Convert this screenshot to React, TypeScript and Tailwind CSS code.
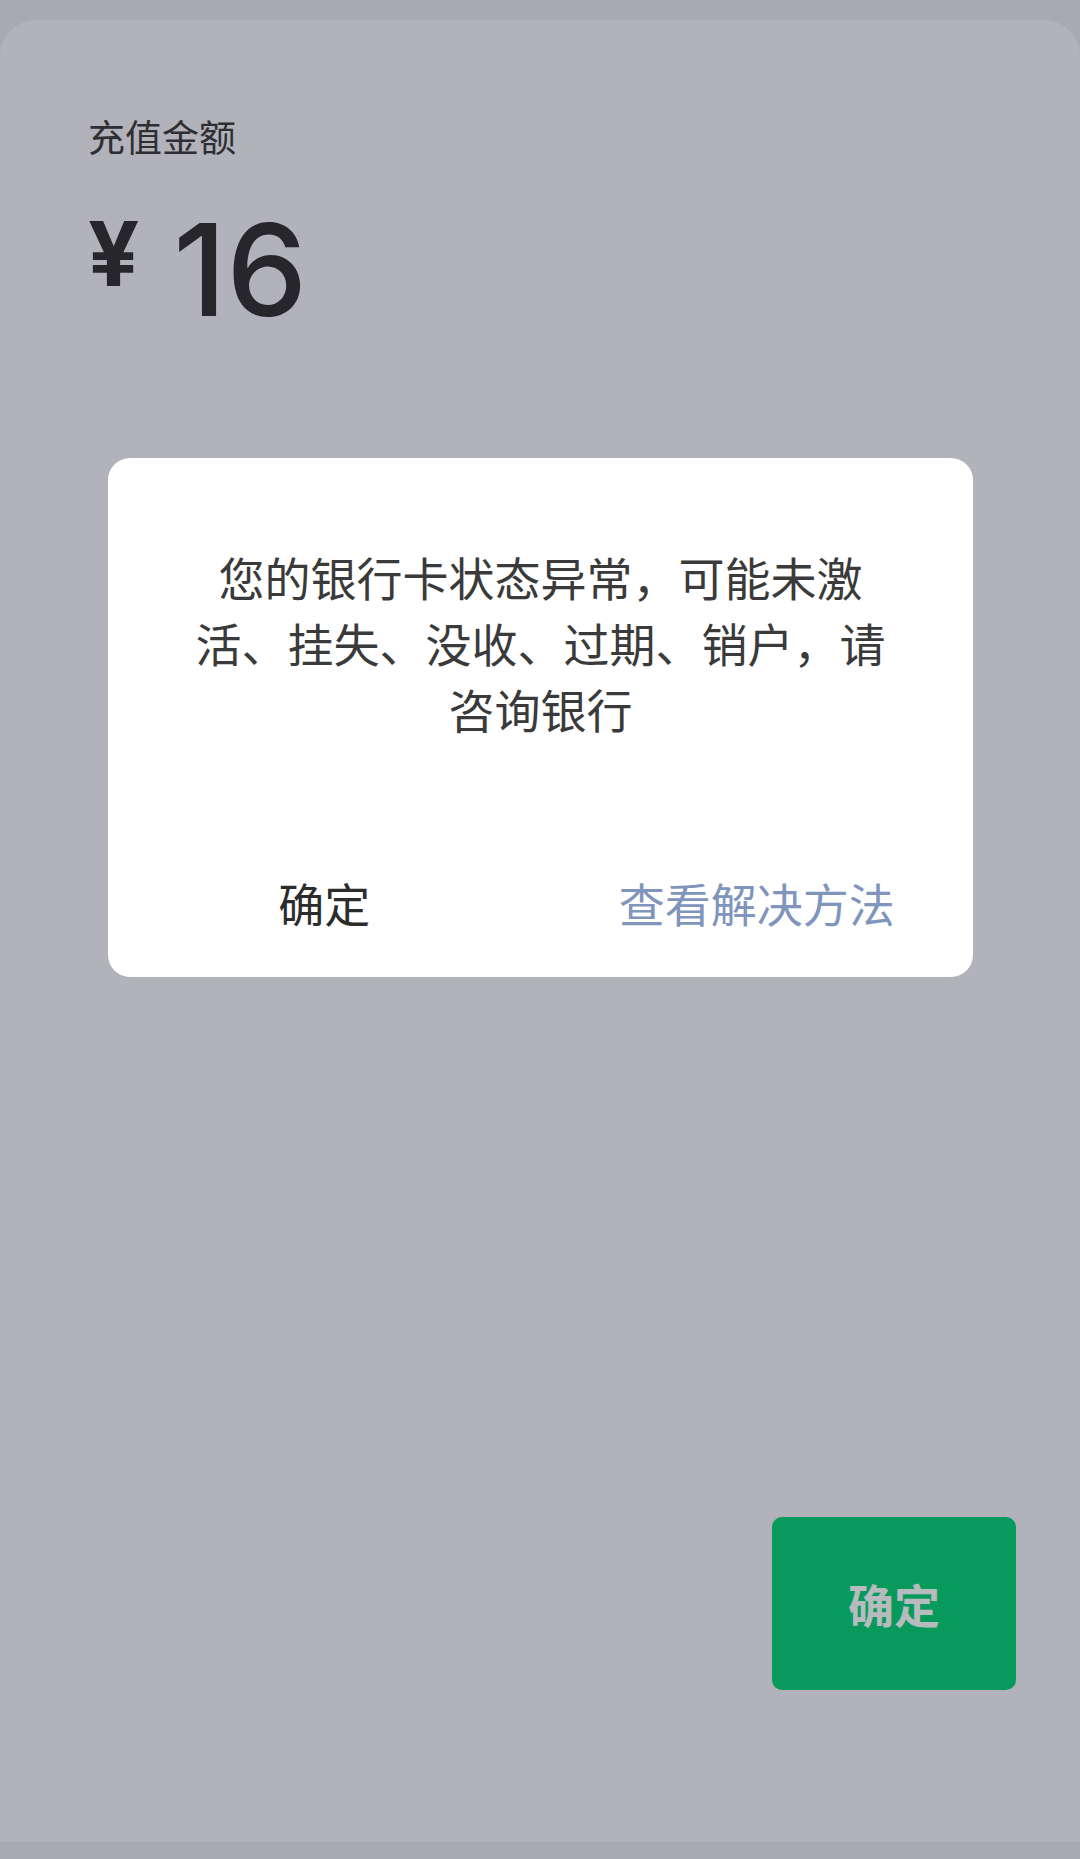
import React from 'react';

const cjk = { fontFamily: '"Noto Sans CJK SC", "Noto Sans", sans-serif' };
const num = { fontFamily: 'Inter, "Noto Sans", sans-serif' };

function ErrorDialog() {
  return (
    <div className="absolute left-[108px] top-[458px] w-[865px] h-[519px] bg-white rounded-[22px] flex flex-col">
      <p className="pt-[85px] px-[80px] text-center text-[46px] leading-[66px] text-[#3a3a3a]" style={cjk}>
        您的银行卡状态异常，可能未激活、挂失、没收、过期、销户，请咨询银行
      </p>
      <div className="mt-[86px] h-[150px] flex">
        <button className="flex-1 flex items-center justify-center text-[46px] leading-[66px] text-[#2c2c2c]" style={cjk}>
          确定
        </button>
        <button className="flex-1 flex items-center justify-center text-[46px] leading-[66px] text-[#7f95bc]" style={cjk}>
          查看解决方法
        </button>
      </div>
    </div>
  );
}

export default function App() {
  return (
    <div className="relative w-[1080px] h-[1859px] bg-[#a9a9b2] pt-[20px] pb-[17px] flex flex-col overflow-hidden">
      <div className="flex-1 bg-[#b2b2bb] rounded-t-[36px] flex flex-col">
        <div className="pt-[90px] pl-[88px]">
          <div className="text-[37px] leading-[52px] text-[#2e2e33]" style={cjk}>充值金额</div>
          <div className="mt-[44px] flex items-start text-[#26262b]" style={num}>
            <span className="mt-[3px] text-[90px] leading-none font-bold">¥</span>
            <span className="ml-[34px] text-[128px] leading-none font-medium">16</span>
          </div>
        </div>
        <div className="flex-1" />
        <div className="flex justify-end pr-[64px] pb-[152px]">
          <button className="w-[244px] h-[173px] rounded-[10px] bg-[#089a5d] flex items-center justify-center text-[46px] font-bold text-[#b8bbbe]" style={cjk}>
            确定
          </button>
        </div>
      </div>
      <ErrorDialog />
    </div>
  );
}
